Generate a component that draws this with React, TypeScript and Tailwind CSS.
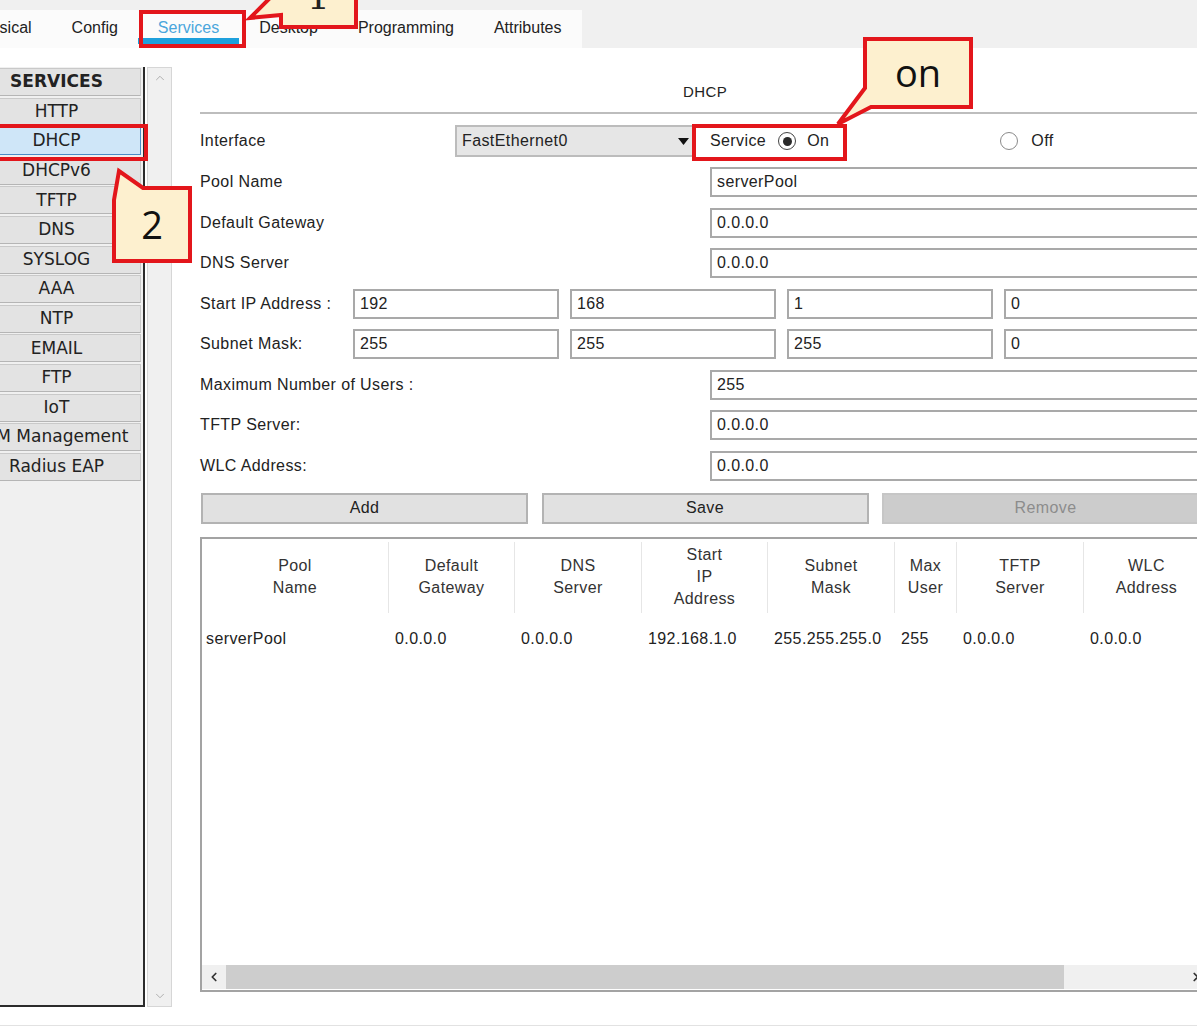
import { ChevronDown, ChevronLeft, ChevronRight, ChevronUp } from "lucide-react";

const tabs = ["Physical", "Config", "Services", "Desktop", "Programming", "Attributes"];

const services = [
  "HTTP",
  "DHCP",
  "DHCPv6",
  "TFTP",
  "DNS",
  "SYSLOG",
  "AAA",
  "NTP",
  "EMAIL",
  "FTP",
  "IoT",
  "VM Management",
  "Radius EAP",
];

const columns = [
  { title: ["Pool", "Name"], value: "serverPool" },
  { title: ["Default", "Gateway"], value: "0.0.0.0" },
  { title: ["DNS", "Server"], value: "0.0.0.0" },
  { title: ["Start", "IP", "Address"], value: "192.168.1.0" },
  { title: ["Subnet", "Mask"], value: "255.255.255.0" },
  { title: ["Max", "User"], value: "255" },
  { title: ["TFTP", "Server"], value: "0.0.0.0" },
  { title: ["WLC", "Address"], value: "0.0.0.0" },
];

function Field({ value, className = "" }: { value: string; className?: string }) {
  return (
    <div
      className={`flex h-[30px] items-center border-2 border-[#a9a9a9] bg-white pl-[5px] text-[#222] ${className}`}
    >
      {value}
    </div>
  );
}

function Radio({ checked }: { checked?: boolean }) {
  return (
    <div
      className={`flex h-[18px] w-[18px] items-center justify-center rounded-full border-[1.5px] bg-white ${
        checked ? "border-[#444]" : "border-[#8a8a8a]"
      }`}
    >
      {checked && <div className="h-[9px] w-[9px] rounded-full bg-[#2a2a2a]" />}
    </div>
  );
}

function WideRow({ label, value }: { label: string; value: string }) {
  return (
    <div className="flex h-[30px] items-center">
      <div className="w-[510px]">{label}</div>
      <Field value={value} className="w-[500px]" />
    </div>
  );
}

function OctetRow({ label, values }: { label: string; values: string[] }) {
  return (
    <div className="flex h-[30px] items-center">
      <div className="w-[153px]">{label}</div>
      <div className="flex gap-[11px]">
        {values.map((v, i) => (
          <Field key={i} value={v} className="w-[206px]" />
        ))}
      </div>
    </div>
  );
}

export default function App() {
  return (
    <div className="relative h-[1028px] w-[1197px] overflow-hidden bg-white font-['Liberation_Sans',Arial,sans-serif] text-[16px] tracking-[0.4px] text-[#222]">
      {/* tab header */}
      <div className="h-[48px] bg-[#f0f0f0] pt-[10px]">
        <div className="ml-[-48px] flex h-[38px] w-fit bg-[#fbfbfb] tracking-normal">
          {tabs.map((t) => (
            <div
              key={t}
              className={`flex h-[34px] items-center border-b-[6px] px-[20px] pt-[7px] ${
                t === "Services" ? "border-[#1ea0dc] text-[#4aa6dc]" : "border-transparent text-[#222]"
              }`}
            >
              {t}
            </div>
          ))}
        </div>
      </div>

      {/* body */}
      <div className="flex h-[977px] items-start">
        {/* services list + scrollbar */}
        <div className="mt-[19px] flex h-[940px]">
          <div className="ml-[-28px] flex h-full w-[173px] flex-col gap-[1.6px] border-b-2 border-r-2 border-[#2b2b2b] bg-[#f0f0f0] pr-[2px] pt-[1px] font-['DejaVu_Sans',Verdana,sans-serif] text-[17px] tracking-normal text-[#222]">
            <div className="flex h-[28px] items-center justify-center whitespace-nowrap border border-[#c9c9c9] border-b-[#b5b5b5] bg-[#e3e3e3] font-bold">
              SERVICES
            </div>
            {services.map((s) => (
              <div
                key={s}
                className={`flex h-[28px] items-center justify-center whitespace-nowrap border ${
                  s === "DHCP"
                    ? "border-[#4a8cc6] bg-[#cfe6f8]"
                    : "border-[#c9c9c9] border-b-[#b5b5b5] bg-[#e3e3e3]"
                }`}
              >
                {s}
              </div>
            ))}
          </div>
          <div className="ml-[2px] flex h-full w-[25px] flex-col items-center justify-between border border-[#d6d6d6] bg-[#f0f0f0] py-[3px] text-[#a6a6a6]">
            <ChevronUp size={14} strokeWidth={1.5} />
            <ChevronDown size={14} strokeWidth={1.5} />
          </div>
        </div>

        {/* DHCP panel */}
        <div className="ml-[28px] flex w-[1010px] flex-col pt-[33px]">
          <div className="flex h-[22px] items-center justify-center text-[15px]">DHCP</div>
          <div className="mt-[9px] h-[2px] bg-[#bdbdbd]" />

          <div className="mt-[11px] flex h-[32px] items-center">
            <div className="w-[255px]">Interface</div>
            <div className="flex h-[32px] w-[240px] items-center justify-between border-2 border-[#bcbcbc] bg-[#e6e6e6] pl-[5px] pr-[4px]">
              <span>FastEthernet0</span>
              <svg width="11" height="7" viewBox="0 0 11 7">
                <polygon points="0,0 11,0 5.5,7" fill="#111" />
              </svg>
            </div>
            <div className="ml-[15px] flex items-center">
              <span>Service</span>
              <span className="ml-[12px]">
                <Radio checked />
              </span>
              <span className="ml-[11px]">On</span>
            </div>
            <div className="ml-[171px] flex items-center">
              <Radio />
              <span className="ml-[13px]">Off</span>
            </div>
          </div>

          <div className="mt-[10px] flex flex-col gap-[10.5px]">
            <WideRow label="Pool Name" value="serverPool" />
            <WideRow label="Default Gateway" value="0.0.0.0" />
            <WideRow label="DNS Server" value="0.0.0.0" />
            <OctetRow label="Start IP Address :" values={["192", "168", "1", "0"]} />
            <OctetRow label="Subnet Mask:" values={["255", "255", "255", "0"]} />
            <WideRow label="Maximum Number of Users :" value="255" />
            <WideRow label="TFTP Server:" value="0.0.0.0" />
            <WideRow label="WLC Address:" value="0.0.0.0" />
          </div>

          <div className="ml-[1px] mt-[12px] flex gap-[13.5px]">
            <div className="flex h-[31px] w-[327px] items-center justify-center border-2 border-[#b3b3b3] bg-[#e1e1e1]">
              Add
            </div>
            <div className="flex h-[31px] w-[327px] items-center justify-center border-2 border-[#b3b3b3] bg-[#e1e1e1]">
              Save
            </div>
            <div className="flex h-[31px] w-[327px] items-center justify-center border-2 border-[#c6c6c6] bg-[#cccccc] text-[#8c8c8c]">
              Remove
            </div>
          </div>

          {/* pool table */}
          <div className="mt-[13px] flex h-[455px] flex-col border-2 border-[#a3a3a3] bg-white">
            <div className="grid h-[74px] grid-cols-[187px_126px_127px_126px_127px_62px_127px_126px] pt-[3px]">
              {columns.map((c, i) => (
                <div
                  key={i}
                  className="flex flex-col items-center justify-center border-r border-[#e6e6e6] leading-[22px] text-[#333]"
                >
                  {c.title.map((l) => (
                    <span key={l}>{l}</span>
                  ))}
                </div>
              ))}
            </div>
            <div className="grid h-[52px] grid-cols-[187px_126px_127px_126px_127px_62px_127px_126px]">
              {columns.map((c, i) => (
                <div key={i} className={`flex items-center ${i === 0 ? "pl-[4px]" : "pl-[6px]"}`}>
                  {c.value}
                </div>
              ))}
            </div>
            <div className="flex-1" />
            <div className="mb-[1px] flex h-[24px]">
              <div className="flex w-[24px] items-center justify-center bg-[#f0f0f0] text-[#333]">
                <ChevronLeft size={14} strokeWidth={3} />
              </div>
              <div className="w-[838px] bg-[#cdcdcd]" />
              <div className="flex flex-1 items-center justify-end bg-[#f0f0f0] pr-[5px] text-[#333]">
                <ChevronRight size={14} strokeWidth={3} />
              </div>
            </div>
          </div>
        </div>
      </div>
      <div className="h-[3px] border-t border-[#e2e2e2] bg-white" />

      {/* red highlight boxes */}
      <div className="absolute left-[139px] top-[10px] h-[38px] w-[107px] border-4 border-[#e3161b]" />
      <div className="absolute left-[-5px] top-[124px] h-[37px] w-[153px] border-4 border-[#e3161b]" />
      <div className="absolute left-[692px] top-[124px] h-[37px] w-[155px] border-4 border-[#e3161b]" />

      {/* callouts */}
      <svg className="pointer-events-none absolute left-0 top-0" width="1197" height="300" viewBox="0 0 1197 300">
        <path
          d="M272 -4 L250 18 L281 15 V27 H356 V-4 Z"
          fill="#fdf0cf"
          stroke="#e3161b"
          strokeWidth="4"
          strokeLinejoin="miter"
        />
        <path
          d="M865 39 H971 V107 H871 L838 124 L865 88 Z"
          fill="#fdf0cf"
          stroke="#e3161b"
          strokeWidth="4"
        />
        <path
          d="M114 200 L119 171 L143 188 H190 V261 H114 Z"
          fill="#fdf0cf"
          stroke="#e3161b"
          strokeWidth="4"
        />
      </svg>
      <div className="absolute left-[281px] top-[-32px] flex h-[58px] w-[75px] items-center justify-center font-['DejaVu_Serif',serif] text-[36px] tracking-normal text-[#222]">
        1
      </div>
      <div className="absolute left-[865px] top-[39px] flex h-[68px] w-[106px] items-center justify-center pb-[2px] font-['Open_Sans',sans-serif] text-[38px] tracking-normal text-[#111]">
        on
      </div>
      <div className="absolute left-[114px] top-[188px] flex h-[73px] w-[76px] items-center justify-center font-['Open_Sans',sans-serif] text-[38px] tracking-normal text-[#111]">
        2
      </div>
    </div>
  );
}
